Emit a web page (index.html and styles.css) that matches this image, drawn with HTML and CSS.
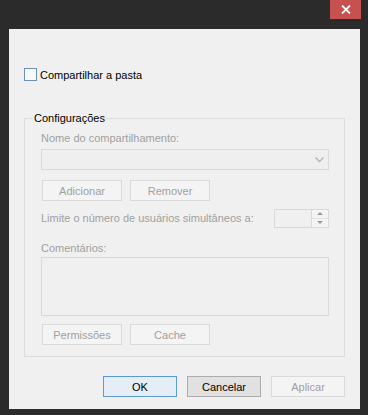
FILE: index.html
```html
<!DOCTYPE html>
<html lang="pt-BR">
<head>
    <meta charset="UTF-8">
    <title>Compartilhamento avançado</title>
    <link rel="stylesheet" href="styles.css">
</head>
<body>
    <div class="titlebar">
        <button class="close" title="Fechar">
            <svg width="10" height="9" viewBox="0 0 10 9"><path d="M1 0.5 L9 8.5 M9 0.5 L1 8.5" stroke="#fff" stroke-width="1.8"/></svg>
        </button>
    </div>

    <div class="dialog">
        <label class="check-row">
            <span class="checkbox"></span>
            Compartilhar a pasta
        </label>

        <div class="group">
            <div class="group-title">Configurações</div>

            <div class="label">Nome do compartilhamento:</div>
            <div class="combo">
                <svg width="9" height="6" viewBox="0 0 9 6"><path d="M0.5 0.5 L4.5 4.5 L8.5 0.5" fill="none" stroke="#b4b4b4" stroke-width="1.4"/></svg>
            </div>

            <div class="btn-row">
                <button class="btn" disabled>Adicionar</button>
                <button class="btn" disabled>Remover</button>
            </div>

            <div class="limit-row">
                <span class="label">Limite o número de usuários simultâneos a:</span>
                <div class="spinner">
                    <div class="spin-field"></div>
                    <div class="spin-buttons">
                        <span class="spin-up"></span>
                        <span class="spin-down"></span>
                    </div>
                </div>
            </div>

            <div class="label comments-label">Comentários:</div>
            <div class="textarea"></div>

            <div class="btn-row bottom">
                <button class="btn" disabled>Permissões</button>
                <button class="btn" disabled>Cache</button>
            </div>
        </div>

        <div class="actions">
            <button class="btn action default">OK</button>
            <button class="btn action">Cancelar</button>
            <button class="btn action" disabled>Aplicar</button>
        </div>
    </div>
</body>
</html>
```

FILE: styles.css
```css
body {
    margin: 0;
    background-color: #2b2b2b;
    font-family: "Liberation Sans", Arial, sans-serif;
    font-size: 11px;
    color: #000;
}

.titlebar {
    height: 29px;
    display: flex;
    justify-content: flex-end;
    padding-right: 7px;
}
.close {
    width: 31px;
    height: 19px;
    border: 0;
    padding: 0;
    background-color: #c75050;
    display: flex;
    align-items: center;
    justify-content: center;
}

.dialog {
    margin-left: 9px;
    width: 351px;
    height: 380px;
    background-color: #f0f0f0;
    box-sizing: border-box;
    padding: 38px 15px 0 15px;
}

.check-row {
    display: flex;
    align-items: center;
    height: 15px;
    gap: 3px;
}
.checkbox {
    width: 11px;
    height: 11px;
    border: 1px solid #6f90b6;
    background-color: #f6f9fc;
}

.group {
    margin-top: 36px;
    border: 1px solid #dcdcdc;
    padding: 0 15px 11px 16px;
}
.group-title {
    margin: -8px 0 0 -8px;
    padding: 0 1px;
    width: fit-content;
    background-color: #f0f0f0;
    line-height: 15px;
}

.label {
    color: #a0a0a0;
    line-height: 15px;
    margin-top: 5px;
}

.combo {
    margin-top: 3px;
    height: 19px;
    border: 1px solid #d9d9d9;
    background-color: #efefef;
    display: flex;
    align-items: center;
    justify-content: flex-end;
    padding-right: 4px;
}

.btn {
    font-family: inherit;
    font-size: 11px;
    width: 80px;
    height: 21px;
    padding: 0;
    border: 1px solid #adadad;
    background-color: #e1e1e1;
    color: #000;
}
.btn:disabled {
    border-color: #d9d9d9;
    background-color: #f4f4f4;
    color: #a0a0a0;
}

.btn-row {
    display: flex;
    gap: 8px;
    margin-top: 10px;
    padding-left: 1px;
}
.btn-row.bottom {
    margin-top: 8px;
}

.limit-row {
    display: flex;
    align-items: center;
    justify-content: space-between;
    margin-top: 7px;
    height: 20px;
}
.limit-row .label {
    margin-top: 0;
}
.spinner {
    display: flex;
    width: 55px;
    height: 19px;
    border: 1px solid #d9d9d9;
    box-sizing: border-box;
}
.spin-field {
    flex: 1;
    background-color: #f0f0f0;
}
.spin-buttons {
    width: 16px;
    display: flex;
    flex-direction: column;
    border-left: 1px solid #d9d9d9;
}
.spin-up,
.spin-down {
    flex: 1;
    background-color: #f4f4f4;
    display: flex;
    align-items: center;
    justify-content: center;
}
.spin-up {
    border-bottom: 1px solid #e3e3e3;
}
.spin-up::before {
    content: "";
    border: 3px solid transparent;
    border-bottom: 3px solid #9a9a9a;
    margin-top: -3px;
}
.spin-down::before {
    content: "";
    border: 3px solid transparent;
    border-top: 3px solid #9a9a9a;
    margin-bottom: -3px;
}

.comments-label {
    margin-top: 13px;
}
.textarea {
    margin-top: 1px;
    height: 57px;
    border: 1px solid #d9d9d9;
    background-color: #f0f0f0;
}

.actions {
    display: flex;
    justify-content: flex-end;
    gap: 10px;
    margin-top: 19px;
}
.btn.action {
    width: 74px;
}
.btn.default {
    border-color: #5b9bd5;
    background-color: #e5eef6;
}
```
